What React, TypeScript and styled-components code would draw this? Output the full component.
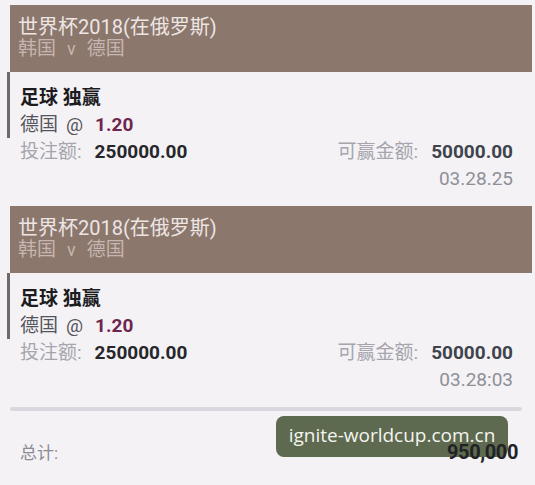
import styled, { createGlobalStyle } from "styled-components";

const GlobalStyle = createGlobalStyle`
  html, body {
    margin: 0;
    padding: 0;
    background: #f4f2f5;
  }
  body {
    font-family: Roboto, "Noto Sans CJK SC", "Noto Sans", sans-serif;
  }
`;

type Bet = {
  event: string;
  home: string;
  away: string;
  market: string;
  pick: string;
  odds: string;
  stake: string;
  payout: string;
  time: string;
};

const bets: Bet[] = [
  {
    event: "世界杯2018(在俄罗斯)",
    home: "韩国",
    away: "德国",
    market: "足球 独赢",
    pick: "德国",
    odds: "1.20",
    stake: "250000.00",
    payout: "50000.00",
    time: "03.28.25",
  },
  {
    event: "世界杯2018(在俄罗斯)",
    home: "韩国",
    away: "德国",
    market: "足球 独赢",
    pick: "德国",
    odds: "1.20",
    stake: "250000.00",
    payout: "50000.00",
    time: "03.28:03",
  },
];

const BetSlip = () => {
  return (
    <>
      <GlobalStyle />
      <Page>
        {bets.map((bet, i) => (
          <Card key={i}>
            <Header>
              <EventName>{bet.event}</EventName>
              <Teams>
                {bet.home}
                <Versus>v</Versus>
                {bet.away}
              </Teams>
            </Header>
            <Selection>
              <Market>{bet.market}</Market>
              <Pick>
                {bet.pick}
                <At>@</At>
                <Odds>{bet.odds}</Odds>
              </Pick>
            </Selection>
            <AmountRow>
              <Amount>
                <Label>投注额:</Label>
                <Value>{bet.stake}</Value>
              </Amount>
              <Amount>
                <Label>可赢金额:</Label>
                <Value $muted>{bet.payout}</Value>
              </Amount>
            </AmountRow>
            <Time>{bet.time}</Time>
          </Card>
        ))}
        <Divider />
        <TotalRow>
          <TotalLabel>总计:</TotalLabel>
          <TotalValue>950,000</TotalValue>
          <Watermark>ignite-worldcup.com.cn</Watermark>
        </TotalRow>
      </Page>
    </>
  );
};

const Page = styled.div`
  width: 535px;
  height: 485px;
  box-sizing: border-box;
  padding: 5px 3px 0 7px;
  overflow: hidden;
`;

const Card = styled.div`
  display: flex;
  flex-direction: column;
  margin-bottom: 14px;
`;

const Header = styled.div`
  margin-left: 3px;
  height: 67px;
  box-sizing: border-box;
  padding: 12px 8px 0;
  background: #8b776b;
  line-height: 21px;
`;

const EventName = styled.div`
  font-size: 20px;
  color: #ede5e4;
`;

const Teams = styled.div`
  font-size: 19px;
  color: #c6b5b0;
`;

const Versus = styled.span`
  font-size: 18px;
  margin: 0 11px;
`;

const Selection = styled.div`
  border-left: 3px solid #6f6a6a;
  padding: 12px 0 0 10px;
  line-height: 27px;
  font-size: 19px;
`;

const Market = styled.div`
  font-weight: 700;
  color: #1c1c1f;
`;

const Pick = styled.div`
  color: #55555c;
`;

const At = styled.span`
  margin: 0 12px 0 8px;
`;

const Odds = styled.span`
  font-weight: 700;
  color: #6e2650;
`;

const AmountRow = styled.div`
  display: flex;
  justify-content: space-between;
  padding: 0 19px 0 13px;
  line-height: 27px;
`;

const Amount = styled.div`
  display: flex;
  align-items: baseline;
  gap: 13px;
`;

const Label = styled.span`
  font-size: 19px;
  color: #a6a5ad;
`;

const Value = styled.span<{ $muted?: boolean }>`
  font-size: 19px;
  font-weight: 700;
  color: ${(p) => (p.$muted ? "#3f444c" : "#26262b")};
`;

const Time = styled.div`
  align-self: flex-end;
  padding-right: 19px;
  line-height: 27px;
  font-size: 19px;
  color: #8f8f97;
`;

const Divider = styled.div`
  margin: 1px 10px 0 3px;
  height: 4px;
  border-radius: 2px;
  background: #d9d8de;
  filter: blur(0.6px);
`;

const TotalRow = styled.div`
  position: relative;
  display: flex;
  justify-content: space-between;
  align-items: baseline;
  margin-top: 28px;
  padding: 0 14px 0 13px;
  line-height: 27px;
`;

const TotalLabel = styled.span`
  font-size: 17px;
  color: #8c8b93;
`;

const TotalValue = styled.span`
  position: relative;
  z-index: 1;
  font-size: 20px;
  font-weight: 700;
  letter-spacing: -0.4px;
  color: #222226;
`;

const Watermark = styled.div`
  position: absolute;
  left: 269px;
  top: -23px;
  width: 232px;
  height: 41px;
  border-radius: 8px;
  background: #5d6a4f;
  color: #f4f4f0;
  font-family: "Open Sans", "Noto Sans", sans-serif;
  font-size: 19px;
  line-height: 38px;
  text-align: center;
`;

export default BetSlip;
